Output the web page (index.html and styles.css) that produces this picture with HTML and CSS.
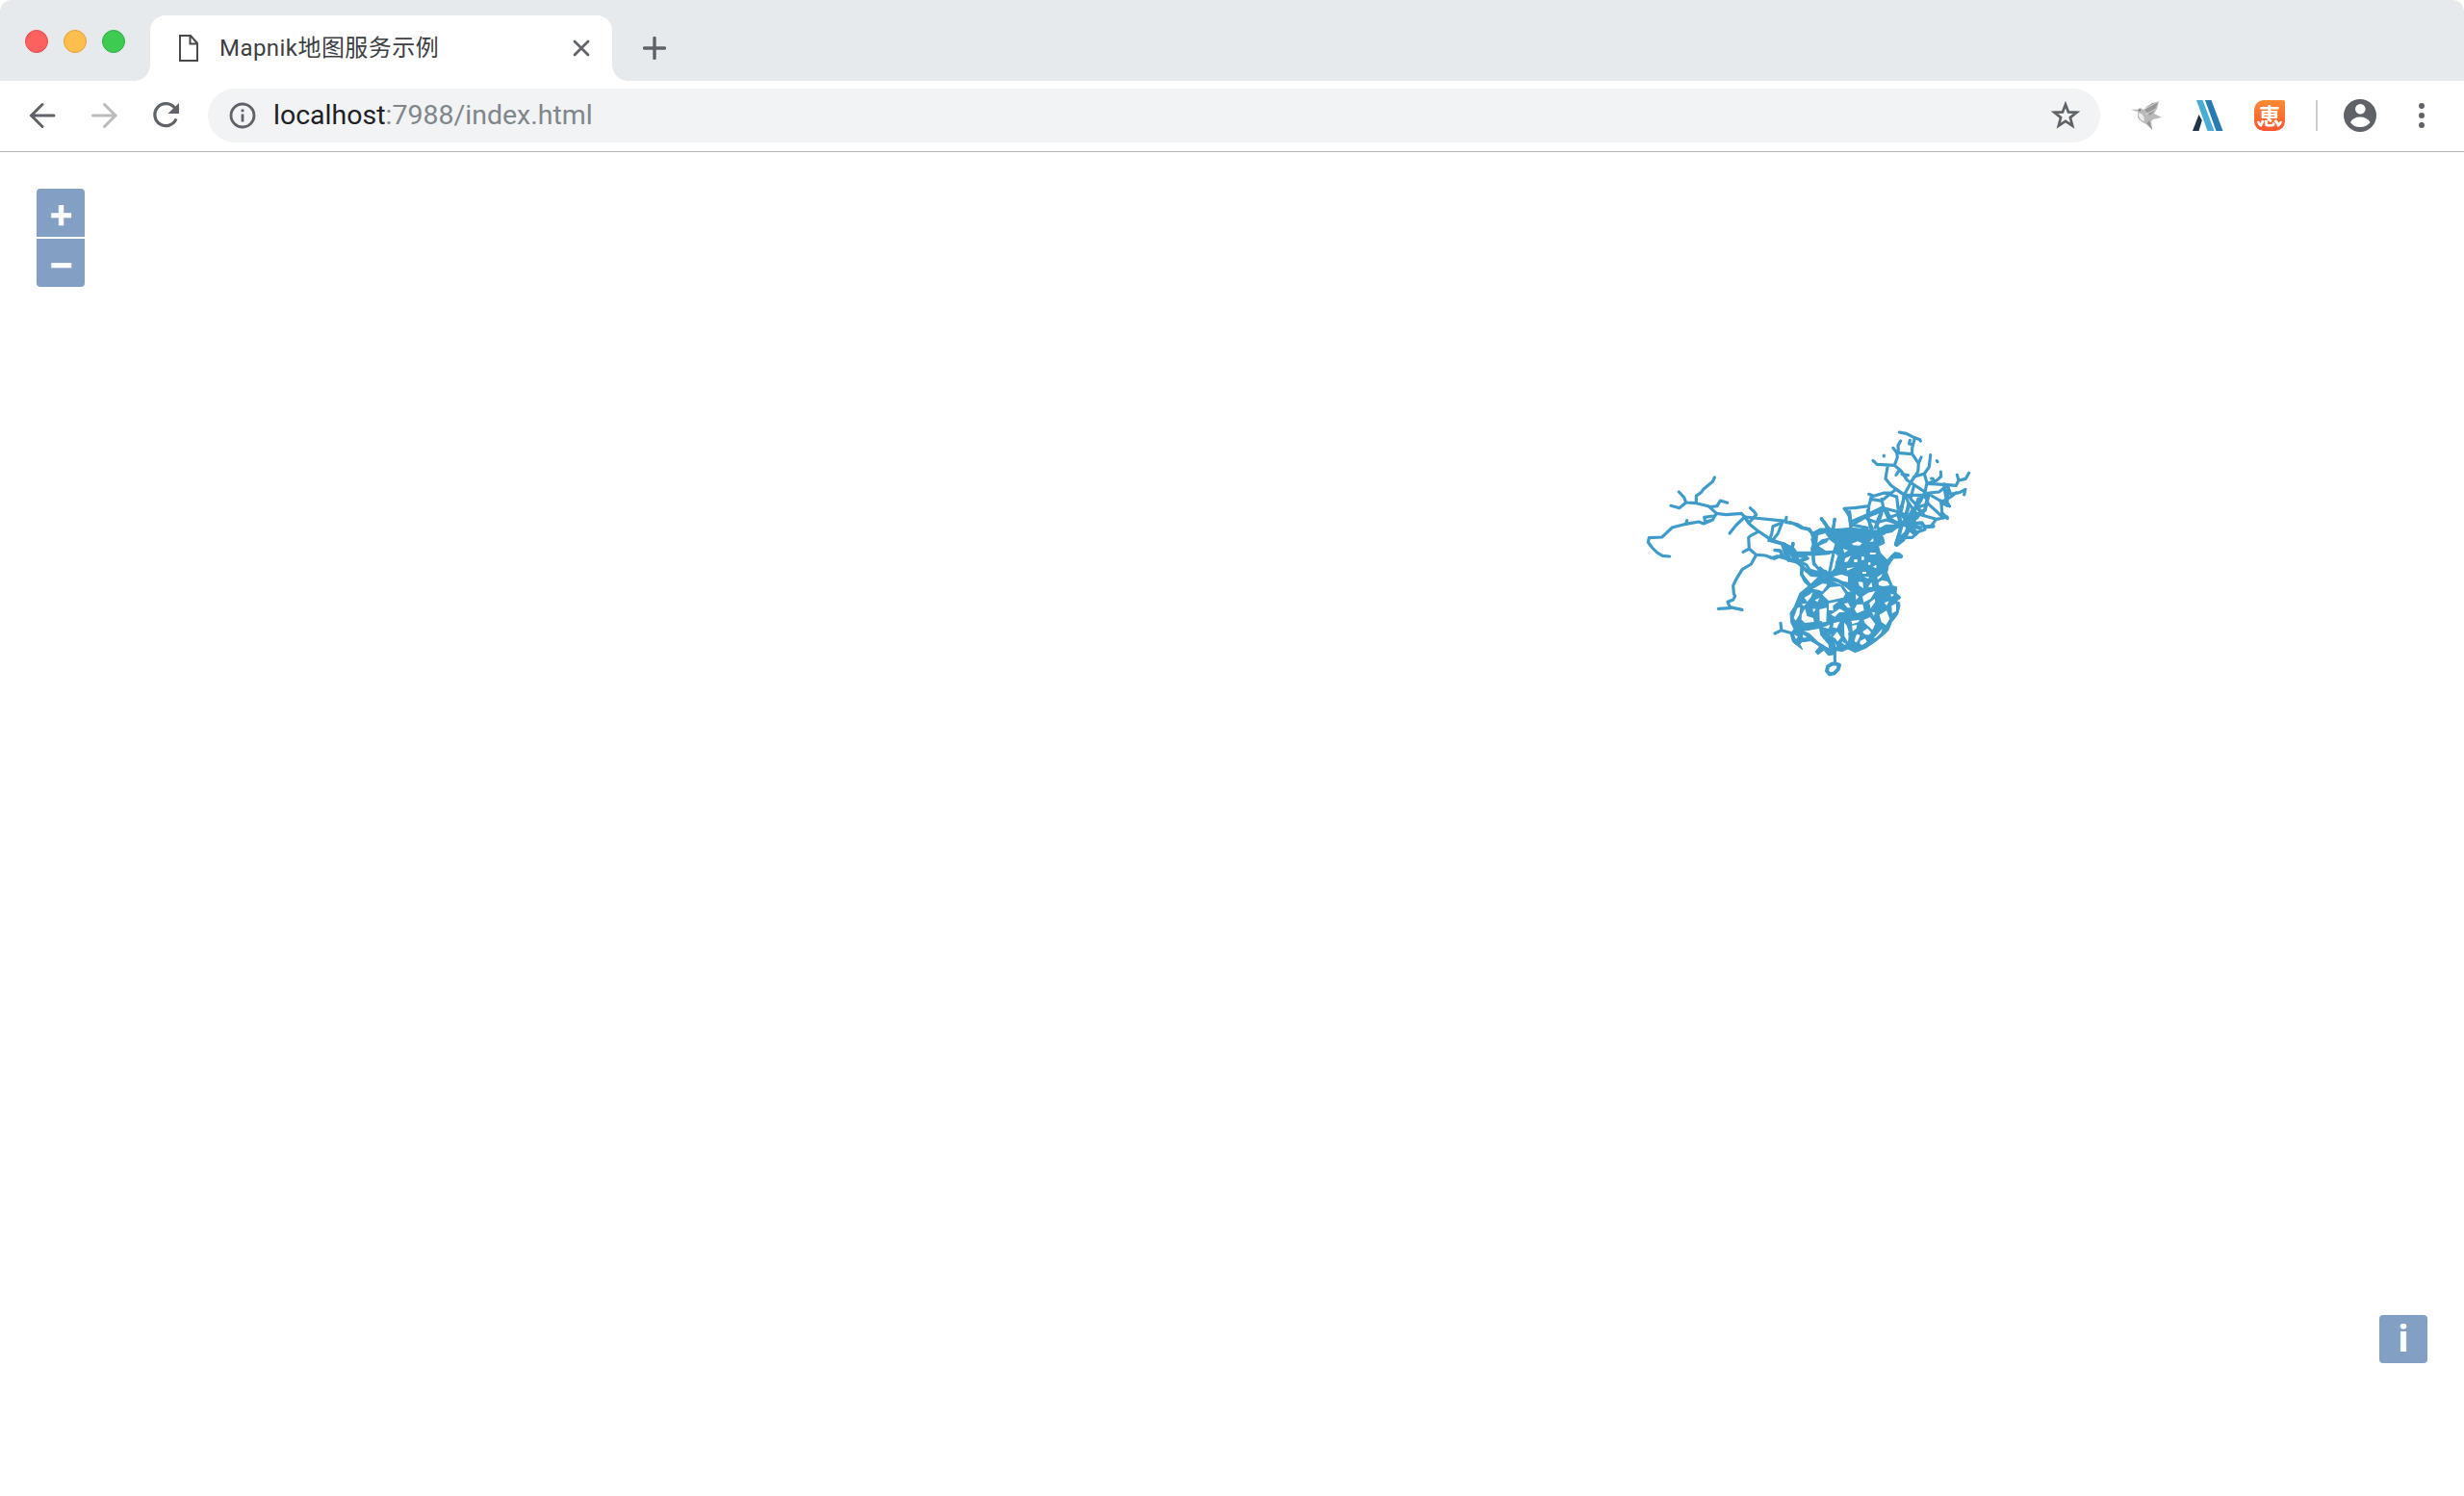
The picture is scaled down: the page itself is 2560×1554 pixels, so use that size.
FILE: index.html
```html
<!DOCTYPE html>
<html lang="zh-CN">
<head>
<meta charset="utf-8">
<title>Mapnik地图服务示例</title>
<link rel="stylesheet" href="styles.css">
</head>
<body>
<div class="browser">
  <header class="tabstrip">
    <div class="lights"><i class="light red"></i><i class="light amber"></i><i class="light green"></i></div>
    <div class="tab">
      <svg class="doc" width="20" height="28" viewBox="0 0 20 28"><path d="M1 1H12L19 9V27H1ZM11.500 1V9.500H19" fill="none" stroke="#48494b" stroke-width="2"/></svg>
      <span class="title">Mapnik地图服务示例</span>
      <svg class="close" width="18" height="18" viewBox="0 0 18 18"><path d="M2 2L16 16M16 2L2 16" stroke="#5f6368" stroke-width="2.800" stroke-linecap="round"/></svg>
    </div>
    <svg class="newtab" width="24" height="24" viewBox="0 0 24 24"><path d="M12 1.500V22.500M1.500 12H22.500" stroke="#5f6368" stroke-width="3.400" stroke-linecap="round"/></svg>
  </header>
  <nav class="toolbar">
    <div class="navs">
      <svg width="32" height="32" viewBox="0 0 32 32"><path d="M16 4.500L4.500 16L16 27.500M5 16H28" fill="none" stroke="#5f6368" stroke-width="3" stroke-linecap="round"/></svg>
      <svg width="32" height="32" viewBox="0 0 32 32"><path d="M16.500 4.500L28 16L16.500 27.500M27 16H4.500" fill="none" stroke="#babcbe" stroke-width="3" stroke-linecap="round"/></svg>
      <svg width="32" height="32" viewBox="0 0 32 32"><path d="M25.500 8.200A11.500 11.500 0 1 0 27 19.500" fill="none" stroke="#5f6368" stroke-width="3.200"/><path d="M30 3V14H18.500Z" fill="#5f6368"/></svg>
    </div>
    <div class="omnibox">
      <svg width="28" height="28" viewBox="0 0 28 28"><circle cx="14" cy="14" r="12" fill="none" stroke="#5f6368" stroke-width="2.800"/><path d="M14 12.500V20.500M14 7.500V10.200" stroke="#5f6368" stroke-width="2.800"/></svg>
      <span class="url"><b>localhost</b>:7988/index.html</span>
      <svg class="star" width="30" height="30" viewBox="0 0 30 30"><path d="M15 3.500L18 11.400L26.500 11.800L19.900 17.100L22.200 25.600L15 20.900L7.800 25.600L10.100 17.100L3.500 11.800L12 11.400Z" fill="none" stroke="#5f6368" stroke-width="2.700"/></svg>
    </div>
    <div class="extensions">
      <svg width="32" height="32" viewBox="0 0 32 32"><path d="M0 10L7 9.500Q10 7 13 10L17 6L29 1L27 9L24 14L32 18L23 20L21 22L22 31L16 25Q10 23 7 18V12Z" fill="#b9b9b9"/><path d="M14 10L22 3L28 2L25 10L20 16ZM19 21L22 30L16 24Z" fill="#979797"/><path d="M7.500 13Q14 14 14 22Q8 21 7.500 13Z" fill="#eee"/><path d="M13 10L29 1M15 15L26 9" stroke="#d6d6d6"/><circle cx="9" cy="10.500" r="1" fill="#666"/></svg>
      <svg width="32" height="32" viewBox="0 0 32 32"><path d="M4 0H10.500L22.500 32H15.500Z" fill="#49acd5"/><path d="M13 0H19.500L31.500 32H24.500Z" fill="#277bb1"/><path d="M6.500 15L9.800 21L6.500 32H0Z" fill="#203349"/></svg>
      <div class="hui"><svg width="32" height="32" viewBox="0 0 32 32"><path d="M4 22Q5 26 8 27M28 22Q27 26 24 27" fill="none" stroke="#fff" stroke-width="2.300"/></svg><span>恵</span></div>
    </div>
    <i class="divider"></i>
    <svg class="avatar" width="34" height="34" viewBox="0 0 34 34"><circle cx="17" cy="17" r="17" fill="#5f6368"/><circle cx="17.300" cy="10.300" r="5.300" fill="#fff"/><path d="M7 24Q10 18.500 17 18.500T27.500 24Q24 29 17 29T7 24Z" fill="#fff"/></svg>
    <svg width="6" height="26" viewBox="0 0 6 26"><g fill="#5f6368"><circle cx="3" cy="3" r="3"/><circle cx="3" cy="13" r="3"/><circle cx="3" cy="23" r="3"/></g></svg>
  </nav>
  <main class="map">
    <div class="zoom"><button>+</button><button>−</button></div>
    <svg class="roads" width="350" height="270" viewBox="1704 440 350 270">
      <!-- western lines -->
      <g class="road" transform="translate(1700 440) scale(.33333)">
        <path d="M244 168L238 181L210 204L202 215L187 225V246M133 213L149 230L155 246L187 248L225 257L250 280L280 284L328 280L338 291L355 315L380 335L410 355L430 365L460 375L485 390L498 405L550 408L600 404"/>
        <path d="M108 256L135 263L155 246M230 260L252 257L262 240L284 247M250 280L238 300L215 307L212 292L240 288M238 300L210 312L195 306L155 313L112 324L95 340L80 354L40 356L37 370L50 387L65 402L82 412L104 414M155 313L158 302"/>
        <path d="M338 291L310 318L291 342M338 291L350 310L374 284L368 275L355 263M380 337L357 349L350 355L352 390L333 400M352 390L374 409L402 411L430 421L453 411L475 426L510 434"/>
        <path d="M374 409L358 438L330 455L310 488L302 505L304 530L308 538L302 549L285 556L292 572L330 580M292 575L256 577"/>
        <path d="M338 291L468 304M468 292L465 307L488 311L515 325L535 329L550 343L575 330L600 330M455 308L442 342L428 360M452 310L426 320L422 345L413 365M432 394L447 396L456 411M455 377L464 405L475 426M465 377L478 400L498 430M490 374L485 390M498 405L505 430L535 420L520 415M498 430L540 464L575 470L600 465M520 435L515 470L525 490L545 510M510 434L530 460M578 297L590 312L596 330M550 343L560 365L600 368M558 360L548 390L555 440"/>
      </g>
      <!-- north-eastern lines -->
      <g class="road" transform="translate(1860 440) scale(.33333)">
        <path d="M340 27L362 31L385 43L404 50L406 54M388 46L380 75V95L332 91L321 76M337 90L336 68L344 54M373 52L371 63L382 66M332 91L334 105L325 130L270 127L258 115M304 130L297 172L314 193L345 215L370 229M325 130L345 147L365 177L420 213L470 242M330 160L340 145M348 158L367 161M380 95L400 124L408 105M400 124L398 150L375 185L355 223L347 270M375 185L386 166L418 156L433 135L437 98M418 156L426 185L420 213L400 250L370 290M426 187L480 190L517 193L525 177L547 172L557 154M525 177L520 160M426 187L455 178L470 165L469 150M440 171L445 172M457 116L459 119M292 99V102M433 216L464 213L490 193L500 220L527 215L546 205L542 222M470 245L498 230L517 215M470 242L473 278L490 296M420 213L430 250L478 294L455 298L440 318M493 205L488 244L497 258M470 242L488 244"/>
        <path d="M245 220L260 226L293 216L315 216L330 205L355 223L350 250L342 265M253 228L245 257L205 262L168 265L183 280L190 330M245 257L243 293L250 325M190 306L240 284L285 262L337 275L370 290M285 235L290 262L305 293L345 320M250 235L285 241L315 216M293 216L332 228L336 265M185 275L190 315L240 325M357 223L370 250L393 280L420 288L450 296M355 223H410L425 234M385 195L375 235L400 260L430 250M290 262L275 295L265 325M305 293L340 282L347 318L370 290M97 297L115 320L125 340M138 299L134 330L125 345M0 308L22 314L40 325L60 329L70 345L95 332L125 335"/>
        <path class="dense" d="M342 275L360 300L380 312L410 310L418 322L446 320M370 250L360 290L372 330L390 345M400 235L380 290L350 310L310 325L290 342M430 225L420 268L395 285L370 330L352 362L332 378M348 310L340 345L330 375M470 242L490 255M410 230L395 260L415 285M395 293L370 300L340 320L300 320L265 340L240 335M405 325L350 315M480 190L488 240L475 250M478 290L488 292"/>
      </g>
      <!-- central and southern network -->
      <g transform="translate(1840 530) scale(.33333)">
        <path class="mass" d="M145 66L185 60L250 55L300 60L340 65L350 85L354 103L335 112L340 132L362 155L385 131L400 133L411 142L408 149L382 150L366 173L362 195L373 222L379 236L392 239L390 258L404 270L402 276L390 283L401 288L402 298L395 325L376 349L366 374L352 388L322 412L295 430L262 443L240 432L222 440L206 437L194 450L178 452L165 436L146 450L138 441L153 424L124 407L96 410L90 418L98 434L90 428L68 411L60 385L72 370L62 350L60 320L73 300L90 258L119 235L150 208L178 204L200 180L203 160L210 142L198 132L138 134L125 90Z"/>
        <path class="gap" d="M160 263L184 240L216 237L232 261L225 272L180 282ZM193 207L220 200L240 207L240 224L225 221ZM151 309L174 304L172 348L152 350ZM103 377L150 369L154 390L178 418L181 431L160 417L130 403L118 386ZM96 325L106 307L112 330L132 336L134 348L106 351L95 341ZM82 305L91 302L88 326L77 344L71 336ZM104 272L120 263L130 255L125 270L113 285ZM260 308L268 294L286 293L290 312L268 321ZM289 342L309 333L325 355L316 373L293 352ZM338 326L360 313L370 338L358 358L344 348ZM228 350L236 359L243 382L240 410L229 393ZM194 352L215 347L204 370L193 375ZM189 400L206 378L218 397L206 410ZM287 377L301 368L312 381L299 395L286 391ZM335 225L346 218L363 222L370 234L350 237L336 234ZM285 269L303 257L325 252L310 276L289 287ZM252 104L270 97L284 103L276 110L256 109ZM147 78L169 72L179 86L158 91L145 102ZM150 111L175 100L180 91L199 105L193 125L156 127ZM272 223L286 224L288 243L275 235ZM376 298L390 291L390 314L377 322ZM278 407L294 400L299 410L285 420L277 416ZM264 385L278 389L270 407L257 421L254 412ZM153 368L190 354L181 368L160 369ZM178 382L189 380L185 399L170 392ZM195 320L214 307L231 317L213 318L199 332L187 325ZM180 290L210 284L193 298L194 313L180 311ZM224 234L191 222L207 225L232 240L248 253L240 255ZM130 245L160 229L177 230L160 253L148 248ZM320 399L347 369L343 382L328 397ZM250 345L276 342L272 349L253 355ZM245 361L268 357L266 368L246 385ZM307 289L323 276L325 285L310 306ZM331 209L347 198L343 208L333 216ZM231 150L249 142L239 160L229 162ZM236 181L260 178L238 188ZM318 176L328 170V181ZM290 207L306 208L303 213ZM303 239L313 224L316 239ZM353 289L367 283L361 297ZM373 260L384 264L375 270ZM137 280L151 274L145 286ZM130 307L140 308L132 319ZM228 291L240 289L248 304L238 304ZM220 412L232 404L232 421ZM199 414L210 414L203 427ZM309 132H328L325 138H308ZM259 153H269V162H259ZM282 145H290V155H282ZM303 163H310V170H303ZM225 120L240 125L229 133ZM314 317L324 318L321 329ZM308 99L318 87L320 97ZM285 192H297V198H285ZM264 262L274 270L265 279ZM72 388L84 394L78 402ZM100 388L112 396L98 398ZM96 292L110 290L102 299Z"/>
        <path class="road" d="M0 96L35 105L68 118L78 132L138 134L200 130L220 100M68 103L65 119M40 105L60 155M50 110L76 145L88 162M12 125L30 126L39 148M0 149L20 143L52 152L85 158L107 153L110 145L85 143L80 133M85 158L110 170L120 186L140 192L170 190L178 207M96 165L95 200L107 215L124 237L150 210L178 204M110 188L125 202L175 207M138 134L132 90L150 68L187 60M128 74L137 110L168 130M131 135L133 165L150 185M195 133L181 200L178 238M153 180L180 205L225 190M157 26L170 45L187 64M199 28L193 60M233 0L245 20L249 50M301 0L302 25L316 58M249 48L288 25L350 0M300 28L330 38L360 30L402 44L375 65L345 70M345 10L330 50L340 62L381 54L412 40L435 18M360 0L375 30L405 44L430 42L420 70L400 88L388 107L400 70L410 42L440 55L456 70M440 0L425 30L402 40L395 10M445 30L480 0M400 97L415 85L440 85L460 67L480 60"/>
        <path class="road" d="M30 352L33 374L12 384M33 374L65 383L85 375L118 388L155 424L180 435M199 440V465L200 478M89 393L105 406M190 350L183 377L165 370M195 370L215 377L230 410M175 390L198 404L215 430M245 385L255 410L275 425M275 370L260 390L250 430M310 395L292 392L275 380M155 350L160 379L175 390L195 376M230 342L247 353L250 380"/>
        <path class="road dense" d="M200 478L213 482L209 496L197 508L183 511L174 501L177 487L190 479Z"/>
      </g>
    </svg>
    <button class="info">i</button>
  </main>
</div>
</body>
</html>
```
FILE: styles.css
```css
* { box-sizing: border-box; }
body { margin: 0; background: #fff; font-family: Roboto, "Noto Sans CJK SC", sans-serif; }
.browser { width: 2560px; height: 1554px; display: flex; flex-direction: column; background: #fff; border-radius: 10px; overflow: hidden; }
.browser svg { display: block; flex: none; }
.tabstrip { height: 84px; flex: none; display: flex; background: #e6eaed; border-radius: 12px 12px 0 0; }
.lights { width: 156px; padding: 31px 0 0 26px; display: flex; gap: 16px; }
.light { width: 24px; height: 24px; border-radius: 50%; border: 1px solid; }
.red { background: #fc6160; border-color: #e24b4b; }
.amber { background: #fdbe4e; border-color: #e0a13a; }
.green { background: #3ecb52; border-color: #2fae40; }
.tab { position: relative; width: 480px; height: 68px; margin-top: 16px; padding: 0 23px 0 30px; display: flex; align-items: center; background: #fff; border-radius: 16px 16px 0 0; }
.tab::before, .tab::after { content: ""; position: absolute; bottom: 0; width: 16px; height: 16px; }
.tab::before { left: -16px; background: radial-gradient(circle at 0 0, transparent 15.500px, #fff 16px); }
.tab::after { right: -16px; background: radial-gradient(circle at 100% 0, transparent 15.500px, #fff 16px); }
.title { flex: 1; margin-left: 22px; font-size: 24px; line-height: 36px; color: #3c4043; white-space: nowrap; letter-spacing: .45px; }
.newtab { margin: 38px 0 0 32px; }
.toolbar { height: 74px; flex: none; display: flex; align-items: center; padding: 0 41px 1px 28px; border-bottom: 1px solid #b5b5b5; }
.navs { display: flex; gap: 32px; }
.omnibox { width: 1966px; height: 56px; margin-left: 28px; padding: 0 21px 0 22px; display: flex; align-items: center; border-radius: 28px; background: #f1f3f4; }
.url { flex: 1; margin-left: 18px; font-size: 28.500px; line-height: 36px; color: #80868b; }
.url b { font-weight: 400; color: #202124; }
.extensions { display: flex; gap: 32px; margin-left: 32px; }
.hui { display: grid; width: 32px; height: 32px; border-radius: 10px 2px 10px 10px; background: linear-gradient(#fb8b33, #fb5430); color: #fff; }
.hui > * { grid-area: 1 / 1; }
.hui span { justify-self: center; font: 700 23px/31px "Noto Sans CJK JP", sans-serif; }
.divider { width: 2px; height: 32px; margin: 0 27px 0 32px; background: #cfcfcf; }
.avatar { margin-right: 44px; }
.map { position: relative; flex: 1; background: #fff; }
.zoom { position: absolute; left: 38px; top: 38px; display: flex; flex-direction: column; gap: 2px; }
button { width: 50px; height: 50px; padding: 0; border: 0; background: #839fc4; color: #fff; font: 700 40px/50px "Liberation Sans", sans-serif; text-align: center; }
.zoom button { padding: 2px 0 0 1px; -webkit-text-stroke: .6px #fff; }
.zoom button:first-child { border-radius: 4px 4px 0 0; }
.zoom button:last-child { border-radius: 0 0 4px 4px; }
.info { position: absolute; left: 2472px; top: 1208px; border-radius: 4px; font: 700 38px/43px "Noto Sans", sans-serif; padding-bottom: 3px; }
.roads { position: absolute; left: 1704px; top: 282px; }
.road { fill: none; stroke: #3f9bca; stroke-width: 9.500; stroke-linejoin: round; stroke-linecap: round; }
.dense { stroke-width: 12; }
.mass { fill: #3f9bca; stroke: #3f9bca; stroke-width: 3; stroke-linejoin: round; }
.gap { fill: #fff; }
```
